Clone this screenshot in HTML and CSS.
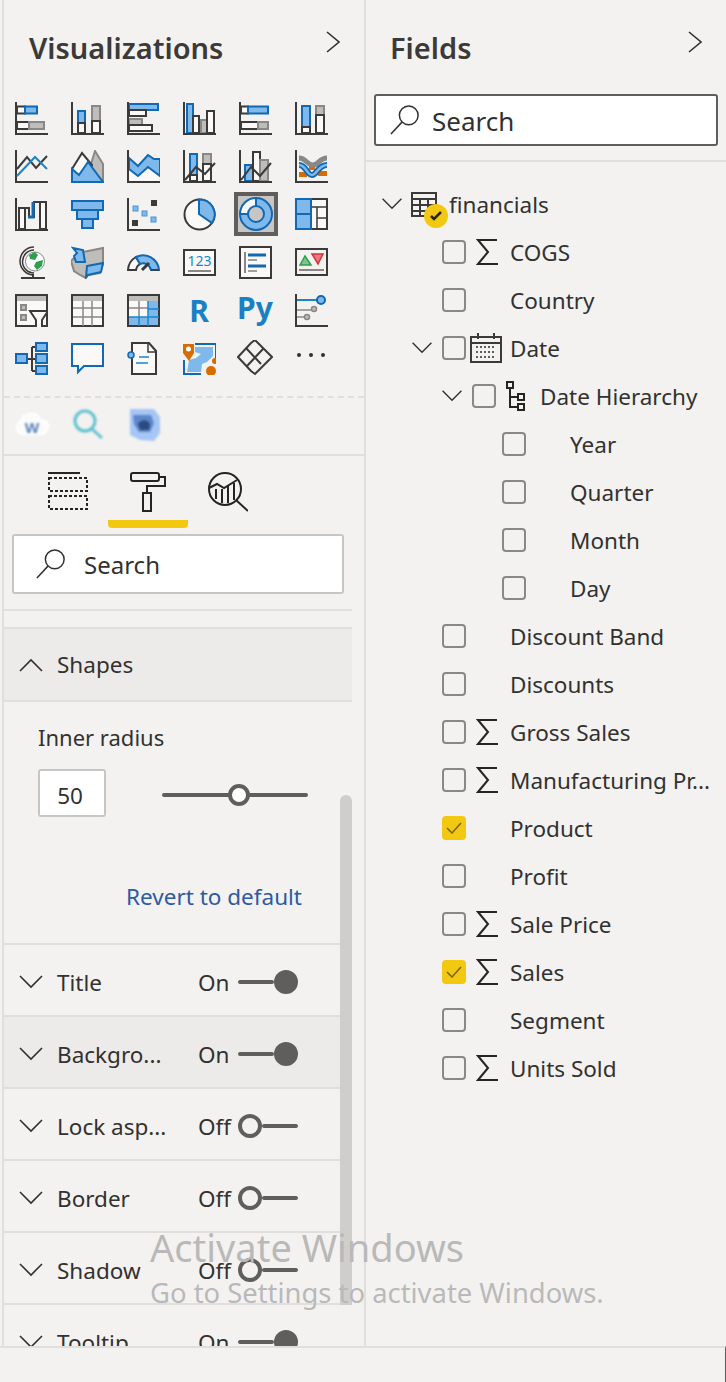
FILE: index.html
```html
<!DOCTYPE html>
<html>

<head>
    <title>Visualizations and Fields</title>
    <link rel="stylesheet" href="styles.css">
</head>

<body>
    <div class="app">
        <div class="panes">

            <!-- visualizations pane -->
            <div class="pane viz-pane">
                <div class="pane-head">
                    <h2 class="pane-title">Visualizations</h2>
                    <svg class="head-arrow" width="14" height="22" viewBox="0 0 14 22"><path class="thin" d="M1 1l12 10L1 21"/></svg>
                </div>

                <div class="viz-grid">
                    <!-- row 1 -->
                    <div class="viz-cell"><svg width="33" height="33" viewBox="0 0 33 33"><rect class="wh" x="2" y="4.500" width="8" height="7"/><rect class="bl" x="10" y="4.500" width="12" height="7"/><rect class="wh" x="2" y="20" width="12" height="7"/><rect class="gr" x="14" y="20" width="15" height="7"/><path class="ax" d="M1 0v32h32"/></svg></div>
                    <div class="viz-cell"><svg width="33" height="33" viewBox="0 0 33 33"><rect class="bl" x="7" y="9" width="7" height="12"/><rect class="wh" x="7" y="21" width="7" height="10"/><rect class="gr" x="21" y="4" width="8" height="15"/><rect class="wh" x="21" y="19" width="8" height="12"/><path class="ax" d="M1 0v32h32"/></svg></div>
                    <div class="viz-cell"><svg width="33" height="33" viewBox="0 0 33 33"><rect class="bl" x="2" y="2" width="29" height="6"/><rect class="wh" x="2" y="8" width="17" height="6"/><rect class="gr" x="2" y="17" width="13" height="6"/><rect class="wh" x="2" y="23" width="23" height="6"/><path class="ax" d="M1 0v32h32"/></svg></div>
                    <div class="viz-cell"><svg width="33" height="33" viewBox="0 0 33 33"><rect class="bl" x="4" y="2" width="6" height="29"/><rect class="wh" x="10" y="14" width="6" height="17"/><rect class="gr" x="18" y="18" width="6" height="13"/><rect class="wh" x="24" y="9" width="7" height="22"/><path class="ax" d="M1 0v32h32"/></svg></div>
                    <div class="viz-cell"><svg width="33" height="33" viewBox="0 0 33 33"><rect class="wh" x="2" y="4.500" width="7" height="7"/><rect class="bl" x="9" y="4.500" width="20" height="7"/><rect class="wh" x="2" y="20" width="17" height="7"/><rect class="gr" x="19" y="20" width="10" height="7"/><path class="ax" d="M1 0v32h32"/></svg></div>
                    <div class="viz-cell"><svg width="33" height="33" viewBox="0 0 33 33"><rect class="bl" x="7" y="4" width="8" height="21"/><rect class="wh" x="7" y="25" width="8" height="6"/><rect class="gr" x="21" y="4" width="8" height="9"/><rect class="wh" x="21" y="13" width="8" height="18"/><path class="ax" d="M1 0v32h32"/></svg></div>

                    <!-- row 2 -->
                    <div class="viz-cell"><svg width="33" height="33" viewBox="0 0 33 33"><path class="ax" d="M1 0v32h32"/><path class="ax" d="M2 19L12 7l9 11L32 6"/><path class="bl-line" d="M2 26L20 7l12 12"/></svg></div>
                    <div class="viz-cell"><svg width="33" height="33" viewBox="0 0 33 33"><path class="gr" d="M20 14L24 1l8 13v18H20z"/><path class="wh" d="M1 19L11 3l10 12-4 17H1z"/><path class="bl" d="M1 19l7 6 9-13 15 20H1z"/></svg></div>
                    <div class="viz-cell"><svg width="33" height="33" viewBox="0 0 33 33"><path class="wh-soft" d="M2 19l9 7 10-9 11 9v6H2z"/><path class="bl" d="M2 8l9 8L21 5l6 4h6v17L21 17l-10 9-9-7z"/><path class="ax" d="M1 0v32h32"/></svg></div>
                    <div class="viz-cell"><svg width="33" height="33" viewBox="0 0 33 33"><rect class="bl" x="7" y="4" width="7" height="21"/><rect class="wh" x="7" y="25" width="7" height="6"/><rect class="gr" x="20" y="4" width="8" height="10"/><rect class="wh" x="20" y="14" width="8" height="17"/><path class="ax" d="M1 0v32h32"/><path class="ax" d="M2 30l11-13 9 7 10-11"/></svg></div>
                    <div class="viz-cell"><svg width="33" height="33" viewBox="0 0 33 33"><rect class="bl" x="6" y="15" width="8" height="16"/><rect class="wh" x="14" y="2" width="7" height="29"/><rect class="gr" x="21" y="10" width="8" height="21"/><path class="ax" d="M1 0v32h32"/><path class="ax" d="M2 30l10-13 9 9 11-13"/></svg></div>
                    <div class="viz-cell"><svg width="33" height="33" viewBox="0 0 33 33"><rect class="orange" x="4" y="22" width="8" height="5"/><rect class="orange" x="23" y="21" width="9" height="5"/><rect class="orange" x="14" y="16" width="6" height="4"/><path class="ribbon-gray" d="M4 8c7 0 8 7 14 7s6-7 14-7"/><path class="ribbon-dark" d="M4 15c7 0 8 10 13 10s6-10 15-10"/><path class="ribbon-blue" d="M4 15c7 0 8 10 13 10s6-10 15-10"/><path class="ax" d="M1 0v32h32"/></svg></div>

                    <!-- row 3 -->
                    <div class="viz-cell"><svg width="33" height="33" viewBox="0 0 33 33"><rect class="wh" x="4" y="10" width="6" height="21"/><rect class="wh" x="25" y="4" width="6" height="27"/><path class="ax" d="M10 10h4v9h5V4h6"/><path class="bl-thick" d="M13 19h5V4"/><path class="ax" d="M1 0v32h32"/></svg></div>
                    <div class="viz-cell"><svg width="33" height="33" viewBox="0 0 33 33"><rect class="bl" x="1" y="3" width="31" height="9"/><rect class="bl" x="6" y="12" width="21" height="9"/><rect class="bl" x="11" y="21" width="11" height="9"/></svg></div>
                    <div class="viz-cell"><svg width="33" height="33" viewBox="0 0 33 33"><rect class="dot-blue" x="6" y="8" width="5" height="5"/><rect class="dot-blue" x="15" y="13" width="5" height="5"/><rect class="dot-blue" x="24" y="19" width="5" height="5"/><rect class="dot-dark" x="24" y="2" width="6" height="6"/><rect class="dot-dark" x="5" y="22" width="6" height="6"/><path class="ax" d="M1 0v32h32"/></svg></div>
                    <div class="viz-cell"><svg width="33" height="33" viewBox="0 0 33 33"><circle class="wh" cx="16.500" cy="16.500" r="15"/><path class="bl" d="M16 16V1.500a15 15 0 0 1 13 23.500z"/></svg></div>
                    <div class="viz-cell"><svg class="viz-selected" width="44" height="44" viewBox="0 0 36 36"><circle class="donut-white" cx="18" cy="18" r="12"/><path class="donut-blue" d="M18 6a12 12 0 1 1-12 12"/><circle class="thin-blue" cx="18" cy="18" r="16"/><circle class="thin-blue" cx="18" cy="18" r="8"/><path class="thin-blue" d="M18 2v8M2 18h8"/></svg></div>
                    <div class="viz-cell"><svg width="33" height="33" viewBox="0 0 33 33"><rect class="wh-grey" x="1" y="1" width="31" height="30"/><path class="ax-thin" d="M16 9h16M22 9v22M22 20h10"/><rect class="bl" x="1" y="1" width="15" height="15"/><rect class="bl" x="1" y="16" width="15" height="15"/></svg></div>

                    <!-- row 4 -->
                    <div class="viz-cell"><svg width="33" height="33" viewBox="0 0 33 33"><circle class="globe" cx="20" cy="15.500" r="9.500"/><path class="green" d="M14 9l6-3 3 3-3 5-5-1zM21 16l7-2-1 6-5 4-3-4z"/><path class="globe-arc" d="M19 1A14 14 0 0 0 19 29"/><path class="globe-arc" d="M19 4A11.500 11.500 0 0 0 19 27"/><path class="ax" d="M18 28v4M6 32h24"/></svg></div>
                    <div class="viz-cell"><svg width="33" height="33" viewBox="0 0 33 33"><path class="gr" d="M12 6l20-4v16l-3 9-12 2-2 3-6-3-6-4-3-10 3-3z"/><path class="bl" d="M2 2l10 2 2 12H5L3 10l3-3z"/><path class="bl" d="M16 20l16-3-2 9-13 3-2 2z"/></svg></div>
                    <div class="viz-cell"><svg width="33" height="33" viewBox="0 0 33 33"><path class="wh" d="M1 24a16 16 0 0 1 8-13l4 7a8 8 0 0 0-4 6z"/><path class="bl" d="M9 11a16 16 0 0 1 23 13h-8a8 8 0 0 0-11-6z"/><path class="needle" d="M15 24l7-7"/><path class="ax-thin" d="M1 24h8M24 24h8"/></svg></div>
                    <div class="viz-cell"><svg width="33" height="33" viewBox="0 0 33 33"><rect class="wh" x="1" y="4" width="31" height="25"/><text class="card-num" x="16.500" y="20" text-anchor="middle">123</text><path class="ax-grey" d="M5 25h23"/></svg></div>
                    <div class="viz-cell"><svg width="33" height="33" viewBox="0 0 33 33"><rect class="wh" x="1" y="1" width="31" height="31"/><path class="ax-grey" d="M6 6v21"/><path class="bar-blue" d="M9 9h18M9 20h18"/><path class="bar-grey" d="M9 14h9M9 25h9"/></svg></div>
                    <div class="viz-cell"><svg width="33" height="33" viewBox="0 0 33 33"><rect class="wh-none" x="1" y="3" width="31" height="26"/><path class="tri-green" d="M5 19l5-9 6 9z"/><path class="tri-red" d="M17 8h11l-5 10z"/><path class="ax-grey" d="M4 24h25"/></svg></div>

                    <!-- row 5 -->
                    <div class="viz-cell"><svg width="33" height="33" viewBox="0 0 33 33"><rect class="wh" x="1" y="1" width="31" height="31"/><rect class="dot-grey" x="2" y="2" width="29" height="5"/><rect class="gr" x="6" y="11" width="5" height="5"/><rect class="gr" x="6" y="21" width="5" height="5"/><path class="funnel" d="M15 17h18l-6 9v8h-6v-8z"/></svg></div>
                    <div class="viz-cell"><svg width="33" height="33" viewBox="0 0 33 33"><rect class="wh" x="1" y="1" width="31" height="31"/><rect class="dot-grey" x="2" y="2" width="29" height="5"/><path class="ax-grey-thin" d="M2 14h29M2 23h29M12 7v25M21 7v25"/></svg></div>
                    <div class="viz-cell"><svg width="33" height="33" viewBox="0 0 33 33"><rect class="wh" x="1" y="1" width="31" height="31"/><rect class="dot-grey" x="2" y="2" width="29" height="5"/><rect class="blue-fill" x="21" y="7" width="10" height="24"/><rect class="blue-fill" x="2" y="23" width="29" height="8"/><path class="ax-grey-thin" d="M2 14h19M12 7v16"/><path class="blue-thin" d="M21 7v25M21 15h11M2 23h30M12 23v9"/></svg></div>
                    <div class="viz-cell"><span class="script-r">R</span></div>
                    <div class="viz-cell"><span class="script-py">Py</span></div>
                    <div class="viz-cell"><svg width="33" height="33" viewBox="0 0 33 33"><path class="ax" d="M1 0v32h32"/><path class="blue-line" d="M2 6h20"/><circle class="blue-dot" cx="26" cy="6" r="4"/><path class="ax-grey-thin" d="M2 16h14M2 23h8"/><circle class="grey-dot" cx="19" cy="15" r="2.500"/><circle class="grey-dot" cx="12" cy="23" r="2.500"/></svg></div>

                    <!-- row 6 -->
                    <div class="viz-cell"><svg width="33" height="33" viewBox="0 0 33 33"><path class="ax" d="M12 17h5M17 5v24M17 5h4M17 17h4M17 29h4"/><rect class="bl" x="1" y="12" width="11" height="9"/><rect class="bl" x="21" y="1" width="11" height="8"/><rect class="bl" x="21" y="12" width="11" height="9"/><rect class="bl" x="21" y="24" width="11" height="8"/></svg></div>
                    <div class="viz-cell"><svg width="33" height="33" viewBox="0 0 33 33"><path class="chat" d="M1 2h31v22H13l-6 6v-6H1z"/></svg></div>
                    <div class="viz-cell"><svg width="33" height="33" viewBox="0 0 33 33"><path class="ax-fill" d="M5 1h17l7 8v23H5z"/><path class="ax-thin" d="M21 1v9h8"/><circle class="note-dot" cx="4" cy="13" r="3"/><path class="blue-thin" d="M12 15h10M9 21h12"/></svg></div>
                    <div class="viz-cell"><svg width="33" height="33" viewBox="0 0 33 33"><path class="arc-frame" d="M12 2h21v14M1 18v14h17"/><path class="arc-blob" d="M12 5h18v9l-6 6-5 2-1 8H4l2-12 7-2 5-4-6-2z"/><path class="orange" d="M0 2h11v9l-5 8-6-8z"/><circle class="dot-white" cx="5.500" cy="7" r="2.500"/><circle class="orange" cx="28" cy="29" r="5"/><circle class="orange" cx="32" cy="19" r="3"/></svg></div>
                    <div class="viz-cell"><svg width="36" height="36" viewBox="0 0 36 36"><path class="ax" d="M1 17L14 3l4-3 17 17-17 17-4-3zM9 8l15 16M26 9L10 26"/></svg></div>
                    <div class="viz-cell"><div class="more-dots"><i></i><i></i><i></i></div></div>
                </div>

                <div class="custom-row">
                    <div class="viz-cell"><svg class="soft" width="38" height="28" viewBox="0 0 38 28"><path class="cloud" d="M9 24a7 7 0 0 1-1-13 10 10 0 0 1 19-1 7 7 0 0 1 2 14z"/><text class="cloud-w" x="19" y="23" text-anchor="middle">W</text></svg></div>
                    <div class="viz-cell"><svg class="soft" width="32" height="32" viewBox="0 0 32 32"><circle class="teal" cx="13" cy="13" r="10"/><path class="teal" d="M20 21l10 9"/></svg></div>
                    <div class="viz-cell"><svg class="soft" width="34" height="34" viewBox="0 0 34 34"><path class="blob" d="M3 2h24l6 8v16l-6 8-14-1L3 28z"/><path class="blob-inner" d="M6 8h18l3 8-4 9H12l-5-8z"/><path class="blob-dark" d="M11 17c3-5 11-5 12 1l-1 5H13z"/></svg></div>
                </div>

                <div class="format-tabs">
                    <div class="format-tab">
                        <svg width="40" height="40" viewBox="0 0 40 40"><path class="tab-line" d="M0 1h32"/><rect class="tab-dash" x="1" y="6" width="38" height="13"/><rect class="tab-dash" x="1" y="24" width="38" height="13"/></svg>
                    </div>
                    <div class="format-tab active">
                        <svg width="40" height="40" viewBox="0 0 40 40"><rect class="tab-line" x="3" y="1" width="28" height="8" rx="2"/><path class="tab-line" d="M31 5h6v9H19v7"/><rect class="tab-line" x="15" y="21" width="8" height="18"/></svg>
                    </div>
                    <div class="format-tab">
                        <svg width="40" height="40" viewBox="0 0 40 40"><circle class="tab-line" cx="17" cy="17" r="16"/><path class="tab-line" d="M1 16l8-4 7 4 13-8M8 17v10M14 17v14M20 14v17M26 11v17M28 28l12 11"/></svg>
                    </div>
                </div>

                <div class="search-box light">
                    <svg width="30" height="30" viewBox="0 0 32 32"><circle class="thin" cx="20" cy="11" r="10"/><path class="thin" d="M13 18L1 31"/></svg>
                    <span class="search-text">Search</span>
                </div>

                <div class="format-list">
                    <div class="section open hover">
                        <svg class="chev" width="24" height="14" viewBox="0 0 24 14"><path class="thin" d="M1 13L12 2l11 11"/></svg>
                        <span class="section-name">Shapes</span>
                    </div>
                    <div class="section-body">
                        <div class="field-label">Inner radius</div>
                        <div class="radius-row">
                            <div class="radius-input">50</div>
                            <div class="slider"><span class="track"></span><span class="slider-thumb"></span></div>
                        </div>
                        <div class="revert">Revert to default</div>
                    </div>
                    <div class="section">
                        <svg class="chev" width="24" height="14" viewBox="0 0 24 14"><path class="thin" d="M1 1l11 11L23 1"/></svg>
                        <span class="section-name">Title</span><span class="state">On</span>
                        <div class="toggle"><span class="track"></span><span class="knob on"></span></div>
                    </div>
                    <div class="section hover">
                        <svg class="chev" width="24" height="14" viewBox="0 0 24 14"><path class="thin" d="M1 1l11 11L23 1"/></svg>
                        <span class="section-name">Backgro...</span><span class="state">On</span>
                        <div class="toggle"><span class="track"></span><span class="knob on"></span></div>
                    </div>
                    <div class="section">
                        <svg class="chev" width="24" height="14" viewBox="0 0 24 14"><path class="thin" d="M1 1l11 11L23 1"/></svg>
                        <span class="section-name">Lock asp...</span><span class="state">Off</span>
                        <div class="toggle"><span class="knob"></span><span class="track"></span></div>
                    </div>
                    <div class="section">
                        <svg class="chev" width="24" height="14" viewBox="0 0 24 14"><path class="thin" d="M1 1l11 11L23 1"/></svg>
                        <span class="section-name">Border</span><span class="state">Off</span>
                        <div class="toggle"><span class="knob"></span><span class="track"></span></div>
                    </div>
                    <div class="section">
                        <svg class="chev" width="24" height="14" viewBox="0 0 24 14"><path class="thin" d="M1 1l11 11L23 1"/></svg>
                        <span class="section-name">Shadow</span><span class="state">Off</span>
                        <div class="toggle"><span class="knob"></span><span class="track"></span></div>
                    </div>
                    <div class="section">
                        <svg class="chev" width="24" height="14" viewBox="0 0 24 14"><path class="thin" d="M1 1l11 11L23 1"/></svg>
                        <span class="section-name">Tooltip</span><span class="state">On</span>
                        <div class="toggle"><span class="track"></span><span class="knob on"></span></div>
                    </div>
                </div>
                <div class="scroll-thumb"></div>
            </div>

            <!-- fields pane -->
            <div class="pane fields-pane">
                <div class="pane-head">
                    <h2 class="pane-title">Fields</h2>
                    <svg class="head-arrow" width="14" height="22" viewBox="0 0 14 22"><path class="thin" d="M1 1l12 10L1 21"/></svg>
                </div>
                <div class="search-box dark">
                    <svg width="30" height="30" viewBox="0 0 32 32"><circle class="thin" cx="20" cy="11" r="10"/><path class="thin" d="M13 18L1 31"/></svg>
                    <span class="search-text">Search</span>
                </div>

                <div class="tree">
                    <div class="tree-row lvl0">
                        <svg class="tree-chev" width="22" height="12" viewBox="0 0 24 14"><path class="thin" d="M1 1l11 11L23 1"/></svg>
                        <div class="table-icon">
                            <svg width="26" height="25" viewBox="0 0 26 25"><path class="ax" d="M1 1h24v23H1zM1 7h24M1 13h24M1 19h18M9 7v17M17 7v17"/></svg>
                            <span class="badge"><svg width="12" height="10" viewBox="0 0 12 10"><path class="badge-check" d="M1 5l3 3 7-7"/></svg></span>
                        </div>
                        <span class="tree-name">financials</span>
                    </div>
                    <div class="tree-row lvl1"><span class="tree-gap"></span><span class="cb"></span><span class="field-icon"><svg width="22" height="28" viewBox="0 0 22 28"><path class="sigma" d="M21 2H2l10 12L2 26h20"/></svg></span><span class="tree-name">COGS</span></div>
                    <div class="tree-row lvl1"><span class="tree-gap"></span><span class="cb"></span><span class="field-icon"></span><span class="tree-name">Country</span></div>
                    <div class="tree-row lvl1">
                        <svg class="tree-chev" width="22" height="12" viewBox="0 0 24 14"><path class="thin" d="M1 1l11 11L23 1"/></svg>
                        <span class="cb"></span>
                        <span class="field-icon tight"><svg width="32" height="30" viewBox="0 0 32 30"><path class="ax" d="M1 4h30v25H1zM1 10h30M8 0v6M24 0v6"/><path class="cal-dots" d="M6 14h20M6 19h20M6 24h20"/></svg></span>
                        <span class="tree-name">Date</span>
                    </div>
                    <div class="tree-row lvl2">
                        <svg class="tree-chev" width="22" height="12" viewBox="0 0 24 14"><path class="thin" d="M1 1l11 11L23 1"/></svg>
                        <span class="cb"></span>
                        <span class="field-icon"><svg width="20" height="30" viewBox="0 0 20 30"><path class="hier" d="M1 1h6v6H1zM12 13h6v6h-6zM12 23h6v6h-6zM4 7v19h8M4 16h8"/></svg></span>
                        <span class="tree-name">Date Hierarchy</span>
                    </div>
                    <div class="tree-row lvl3"><span class="tree-gap"></span><span class="cb"></span><span class="field-icon"></span><span class="tree-name">Year</span></div>
                    <div class="tree-row lvl3"><span class="tree-gap"></span><span class="cb"></span><span class="field-icon"></span><span class="tree-name">Quarter</span></div>
                    <div class="tree-row lvl3"><span class="tree-gap"></span><span class="cb"></span><span class="field-icon"></span><span class="tree-name">Month</span></div>
                    <div class="tree-row lvl3"><span class="tree-gap"></span><span class="cb"></span><span class="field-icon"></span><span class="tree-name">Day</span></div>
                    <div class="tree-row lvl1"><span class="tree-gap"></span><span class="cb"></span><span class="field-icon"></span><span class="tree-name">Discount Band</span></div>
                    <div class="tree-row lvl1"><span class="tree-gap"></span><span class="cb"></span><span class="field-icon"></span><span class="tree-name">Discounts</span></div>
                    <div class="tree-row lvl1"><span class="tree-gap"></span><span class="cb"></span><span class="field-icon"><svg width="22" height="28" viewBox="0 0 22 28"><path class="sigma" d="M21 2H2l10 12L2 26h20"/></svg></span><span class="tree-name">Gross Sales</span></div>
                    <div class="tree-row lvl1"><span class="tree-gap"></span><span class="cb"></span><span class="field-icon"><svg width="22" height="28" viewBox="0 0 22 28"><path class="sigma" d="M21 2H2l10 12L2 26h20"/></svg></span><span class="tree-name">Manufacturing Pr...</span></div>
                    <div class="tree-row lvl1"><span class="tree-gap"></span><span class="cb checked"><svg width="16" height="12" viewBox="0 0 16 12"><path class="cb-check" d="M1 6l5 5L15 1"/></svg></span><span class="field-icon"></span><span class="tree-name">Product</span></div>
                    <div class="tree-row lvl1"><span class="tree-gap"></span><span class="cb"></span><span class="field-icon"></span><span class="tree-name">Profit</span></div>
                    <div class="tree-row lvl1"><span class="tree-gap"></span><span class="cb"></span><span class="field-icon"><svg width="22" height="28" viewBox="0 0 22 28"><path class="sigma" d="M21 2H2l10 12L2 26h20"/></svg></span><span class="tree-name">Sale Price</span></div>
                    <div class="tree-row lvl1"><span class="tree-gap"></span><span class="cb checked"><svg width="16" height="12" viewBox="0 0 16 12"><path class="cb-check" d="M1 6l5 5L15 1"/></svg></span><span class="field-icon"><svg width="22" height="28" viewBox="0 0 22 28"><path class="sigma" d="M21 2H2l10 12L2 26h20"/></svg></span><span class="tree-name">Sales</span></div>
                    <div class="tree-row lvl1"><span class="tree-gap"></span><span class="cb"></span><span class="field-icon"></span><span class="tree-name">Segment</span></div>
                    <div class="tree-row lvl1"><span class="tree-gap"></span><span class="cb"></span><span class="field-icon"><svg width="22" height="28" viewBox="0 0 22 28"><path class="sigma" d="M21 2H2l10 12L2 26h20"/></svg></span><span class="tree-name">Units Sold</span></div>
                </div>
            </div>
        </div>

        <div class="status-bar"></div>

        <div class="watermark">
            <div class="wm-big">Activate Windows</div>
            <div class="wm-small">Go to Settings to activate Windows.</div>
        </div>
    </div>
</body>

</html>
```

FILE: styles.css
```css
* {
    box-sizing: border-box;
}

body {
    margin: 0;
    background-color: #f3f2f1;
    color: #323130;
    font-family: "Noto Sans", "Open Sans", sans-serif;
}

.app {
    position: relative;
    width: 726px;
    height: 1382px;
    overflow: hidden;
}

.panes {
    display: flex;
    height: 1346px;
    overflow: hidden;
}

.status-bar {
    height: 36px;
    border-top: 2px solid #e1dfdd;
    border-right: 1px solid #605e5c;
}

.pane {
    position: relative;
    height: 100%;
}

.viz-pane {
    width: 364px;
    margin-left: 2px;
    border-left: 2px solid #e1dfdd;
    border-right: 2px solid #e1dfdd;
}

.fields-pane {
    width: 360px;
}

.pane-head {
    display: flex;
    justify-content: space-between;
    align-items: flex-start;
    height: 94px;
    padding: 26px 24px 0 25px;
}

.fields-pane .pane-title {
    margin-left: -1px;
}

.pane-title {
    margin: 0;
    font-size: 29px;
    font-weight: 600;
    line-height: 44px;
    color: #3b3a39;
}

.head-arrow {
    margin-top: 5px;
}

/* svg strokes */
svg path, svg rect, svg circle {
    fill: none;
}

.thin { stroke: #323130; stroke-width: 1.6; }
.ax { stroke: #3b3a39; stroke-width: 2; }
.ax-thin { stroke: #3b3a39; stroke-width: 1.5; }
path.ax-fill { stroke: #3b3a39; stroke-width: 2; fill: #faf9f8; }
.ax-grey { stroke: #8a8886; stroke-width: 2; }
.ax-grey-thin { stroke: #8a8886; stroke-width: 1.5; }
rect.bl, path.bl { fill: #7fb8ea; stroke: #1168b3; stroke-width: 2; }
rect.gr, path.gr { fill: #bfbdba; stroke: #8a8886; stroke-width: 2; }
rect.wh, path.wh, circle.wh { fill: #faf9f8; stroke: #3b3a39; stroke-width: 2; }
path.wh-soft { fill: #faf9f8; }
rect.wh-grey { fill: #faf9f8; stroke: #3b3a39; stroke-width: 2; }
rect.wh-none { fill: #f3f2f1; stroke: #3b3a39; stroke-width: 2; }
.bl-line { stroke: #1a86c8; stroke-width: 2; }
.bl-thick { stroke: #1168b3; stroke-width: 3; }
.blue-line { stroke: #1a86c8; stroke-width: 2; }
.blue-thin { stroke: #1a86c8; stroke-width: 1.5; }
circle.blue-dot { fill: #7fb8ea; stroke: #1168b3; stroke-width: 2; }
circle.grey-dot { fill: #bfbdba; stroke: #8a8886; stroke-width: 1.5; }
rect.blue-fill { fill: #7fb8ea; }
rect.dot-blue { fill: #7fb8ea; stroke: #4a94d6; stroke-width: 1; }
rect.dot-dark { fill: #3b3a39; }
rect.dot-grey { fill: #bfbdba; }
rect.orange, circle.orange, path.orange { fill: #d96c00; }
circle.dot-white { fill: #ffffff; }
.ribbon-gray { stroke: #8a8886; stroke-width: 5; }
.ribbon-dark { stroke: #1168b3; stroke-width: 6; }
.ribbon-blue { stroke: #7fb8ea; stroke-width: 2.500; }
circle.donut-white { stroke: #faf9f8; stroke-width: 8; }
path.donut-blue { stroke: #7fb8ea; stroke-width: 8; }
.thin-blue { stroke: #1168b3; stroke-width: 2; }
circle.globe { fill: #ffffff; stroke: #8a8886; stroke-width: 1; }
path.green { fill: #2e9e4f; }
.globe-arc { stroke: #3b3a39; stroke-width: 1.5; }
.needle { stroke: #3b3a39; stroke-width: 3; }
.bar-blue { stroke: #1168b3; stroke-width: 3; }
.bar-grey { stroke: #a19f9d; stroke-width: 2; }
path.tri-green { fill: #7fc48e; stroke: #2e9e4f; stroke-width: 1.5; }
path.tri-red { fill: #f0757d; stroke: #d13438; stroke-width: 1.5; }
path.funnel { fill: #faf9f8; stroke: #3b3a39; stroke-width: 2; }
path.chat { fill: #faf9f8; stroke: #1168b3; stroke-width: 2; }
circle.note-dot { fill: #7fb8ea; stroke: #1168b3; stroke-width: 1.5; }
.arc-frame { stroke: #1168b3; stroke-width: 2; }
path.arc-blob { fill: #7fb8ea; }
.card-num {
    font-family: "Noto Sans", sans-serif;
    font-size: 14px;
    fill: #1a86c8;
}

/* visual gallery */
.viz-grid {
    display: grid;
    grid-template-columns: repeat(6, 56px);
    grid-auto-rows: 48px;
    margin-left: -1px;
}

.viz-cell {
    display: flex;
    align-items: center;
    justify-content: center;
}

.viz-selected {
    margin-left: 2px;
    border: 4px solid #605e5c;
    background-color: #c8c6c4;
}

.script-r {
    font-size: 30px;
    font-weight: 700;
    color: #1a7fc4;
}

.script-py {
    font-size: 30px;
    font-weight: 700;
    color: #1a7fc4;
    margin-top: -6px;
}

.more-dots {
    display: flex;
    gap: 8px;
    margin-top: -6px;
}

.more-dots i {
    width: 4px;
    height: 4px;
    border-radius: 50%;
    background-color: #323130;
}

.custom-row {
    display: grid;
    grid-template-columns: repeat(6, 56px);
    grid-auto-rows: 56px;
    margin-top: 14px;
    border-top: 2px dashed #e1dfdd;
    border-bottom: 2px solid #e1dfdd;
}

.custom-row .viz-cell {
    padding-bottom: 4px;
}

.soft {
    filter: blur(1px);
}

path.cloud { fill: #fbfbfb; stroke: #ffffff; stroke-width: 2; }
.cloud-w {
    font-family: "Noto Sans", sans-serif;
    font-size: 15px;
    font-weight: 700;
    fill: #5b83b8;
}
.teal { stroke: #60c1cf; stroke-width: 3; }
path.blob { fill: #a6c6f5; }
path.blob-inner { fill: #5e87c9; }
path.blob-dark { fill: #2c4a80; }

/* format tabs */
.format-tabs {
    display: flex;
    padding-left: 24px;
}

.format-tab {
    display: flex;
    justify-content: center;
    width: 80px;
    height: 72px;
    padding-top: 16px;
    border-bottom: 8px solid transparent;
    border-radius: 4px;
}

.format-tab.active {
    border-bottom-color: #f2c811;
}

.tab-line { stroke: #252423; stroke-width: 2; }
.tab-dash { stroke: #252423; stroke-width: 2; stroke-dasharray: 3 2; }

.search-box {
    display: flex;
    align-items: center;
    background-color: #ffffff;
    border-radius: 3px;
}

.search-box.light {
    height: 60px;
    margin: 6px 20px 15px 8px;
    padding-left: 22px;
    border: 2px solid #c8c6c4;
}

.search-box.dark {
    height: 52px;
    margin: 0 8px 14px;
    padding-left: 14px;
    border: 2px solid #605e5c;
}

.search-text {
    margin-left: 18px;
    font-size: 24px;
}

.search-box.dark .search-text {
    margin: 2px 0 0 12px;
    font-size: 26px;
}

/* format sections */
.format-list {
    width: 348px;
    border-top: 2px solid #e1dfdd;
    padding-top: 16px;
}

.section {
    display: flex;
    align-items: center;
    height: 72px;
    padding: 4px 0 0 15px;
    border-bottom: 2px solid #e1dfdd;
    font-size: 22.500px;
}

.section.open {
    height: 75px;
    padding-top: 0;
    border-top: 2px solid #e1dfdd;
}

.section.hover {
    background-color: #edebe9;
}

.section-name {
    width: 141px;
    margin-left: 14px;
    white-space: nowrap;
}

.state {
    width: 40px;
}

.section-body {
    height: 243px;
    padding: 23px 0 0 34px;
    border-bottom: 2px solid #e1dfdd;
    font-size: 22.500px;
}

.field-label {
    font-size: 22px;
    line-height: 24px;
}

.radius-row {
    display: flex;
    align-items: center;
    margin-top: 20px;
}

.radius-input {
    width: 68px;
    height: 48px;
    padding-right: 4px;
    background-color: #ffffff;
    border: 2px solid #c8c6c4;
    border-radius: 3px;
    text-align: center;
    line-height: 50px;
}

.slider {
    position: relative;
    display: flex;
    align-items: center;
    width: 146px;
    margin: 4px 0 0 56px;
    height: 24px;
}

.slider-thumb {
    position: absolute;
    left: 66px;
    top: 1px;
    width: 22px;
    height: 22px;
    background-color: #ffffff;
    border: 4px solid #605e5c;
    border-radius: 50%;
}

.track {
    flex: 1;
    height: 4px;
    background-color: #605e5c;
    border-radius: 2px;
}

.revert {
    margin: 64px 50px 0 0;
    text-align: right;
    line-height: 32px;
    color: #2e5aa0;
}

.toggle {
    display: flex;
    align-items: center;
    width: 60px;
}

.knob {
    width: 24px;
    height: 24px;
    border: 4px solid #605e5c;
    border-radius: 50%;
}

.knob.on {
    background-color: #605e5c;
}

.scroll-thumb {
    position: absolute;
    left: 336px;
    top: 795px;
    width: 12px;
    height: 510px;
    background-color: #d0cecb;
    border-radius: 6px 6px 0 0;
}

/* fields tree */
.tree {
    border-top: 2px solid #e1dfdd;
    padding-top: 18px;
}

.tree-row {
    display: flex;
    align-items: center;
    height: 48px;
    font-size: 22.500px;
}

.lvl0 { padding-left: 15px; }
.lvl1 { padding-left: 45px; }
.lvl2 { padding-left: 75px; }
.lvl3 { padding-left: 105px; }

.tree-chev {
    flex: none;
    margin-right: 9px;
}

.lvl0 .tree-chev {
    margin-right: 8px;
}

.tree-gap {
    width: 31px;
}

.cb {
    display: flex;
    align-items: center;
    justify-content: center;
    flex: none;
    width: 24px;
    height: 24px;
    border: 2px solid #8a8886;
    border-radius: 4px;
}

.cb.checked {
    background-color: #f2c811;
    border-color: #f2c811;
}

.cb-check { stroke: #7a6300; stroke-width: 1.5; }

.field-icon {
    display: flex;
    align-items: center;
    flex: none;
    width: 44px;
    padding-left: 10px;
}

.field-icon.tight {
    padding-left: 4px;
}

.sigma { stroke: #252423; stroke-width: 2; }
.hier { stroke: #252423; stroke-width: 2; }
.cal-dots { stroke: #605e5c; stroke-width: 2; stroke-dasharray: 2 2; }

.table-icon {
    position: relative;
    width: 38px;
    height: 25px;
}

.badge {
    position: absolute;
    left: 13px;
    top: 12px;
    display: flex;
    align-items: center;
    justify-content: center;
    width: 24px;
    height: 24px;
    background-color: #f2c811;
    border-radius: 50%;
}

.badge-check { stroke: #252423; stroke-width: 2.500; }

.tree-name {
    white-space: nowrap;
}

/* activation notice */
.watermark {
    position: absolute;
    left: 150px;
    top: 1225px;
    color: #b9b9b9;
}

.wm-big {
    font-size: 38px;
    line-height: 44px;
    white-space: nowrap;
}

.wm-small {
    margin-top: 4px;
    font-size: 27.400px;
    line-height: 40px;
    white-space: nowrap;
}
```
